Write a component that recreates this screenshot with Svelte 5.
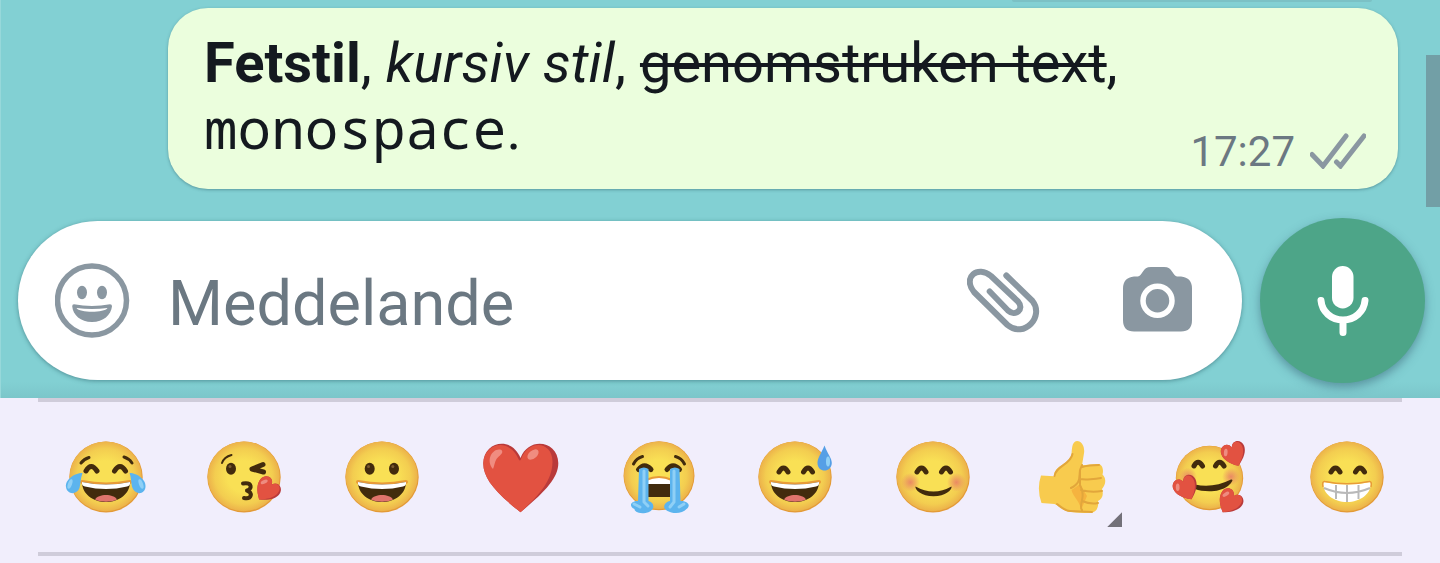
<script>
  const emojis = [
    { id: 'joy', label: 'Glädjetårar' },
    { id: 'kiss', label: 'Slängkyss' },
    { id: 'grinning', label: 'Leende' },
    { id: 'heart', label: 'Rött hjärta' },
    { id: 'sob', label: 'Storgråter' },
    { id: 'sweat', label: 'Svettigt leende' },
    { id: 'blush', label: 'Rodnande leende' },
    { id: 'thumb', label: 'Tummen upp', variants: true },
    { id: 'hearts', label: 'Leende med hjärtan' },
    { id: 'beaming', label: 'Strålande leende' }
  ];

  let message = $state('');

  function addEmoji(emoji) {
    message += emoji.label + ' ';
  }
</script>

{#snippet face()}
  <ellipse cx="45" cy="45" rx="36.700" ry="35.500" fill="#e39a36" />
  <ellipse cx="44.700" cy="44.400" rx="36" ry="34.800" fill="url(#skin)" />
{/snippet}

{#snippet smileEyes()}
  <path class="eye" d="M29 40q4.500-8 9 0M53.500 40q4.500-8 9 0" />
{/snippet}

{#snippet openMouth()}
  <path d="M21 50q24 5 48 0" fill="none" stroke="#e89b38" stroke-width="4" stroke-linecap="round" />
  <path d="M21 50q24 5 48 0C69 62 58 70 45 70S21 62 21 50z" fill="#422b0d" />
  <path d="M21 50q24 5 48 0c.5 3-1 4-3 4.500q-21 5-42 0c-2-.5-3.500-1.500-3-4.500z" fill="#fff" />
  <path d="M34 67.500c3-6 19-6 22 0-6 3-16 3-22 0z" fill="#e0746c" />
{/snippet}

{#snippet smallHeart(transform)}
  <g {transform}>
    <path d="M0 14C-9 8-13 2-13-4c0-8 10-11 13-3 3-8 13-5 13 3C13 2 9 8 0 14z" fill="#b93a3a" />
    <path d="M0 14C-9 8-13 2-13-4c0-8 10-11 13-3 3-7 11-5 11 3C11 2 7 8 0 14z" fill="#e25241" />
    <ellipse cx="-8" cy="-4" rx="2" ry="4" fill="#ee8c80" transform="rotate(25 -8 -4)" />
  </g>
{/snippet}

<main>
  <section class="chat">
    <div class="previous"></div>
    <article class="bubble">
      <p>
        <strong>Fetstil</strong>, <em>kursiv stil</em>, <s>genomstruken text</s>, <code>monospace</code>.
      </p>
      <div class="meta">
        <time>17:27</time>
        <svg width="56" height="36" viewBox="0 0 56 36" role="img" aria-label="Levererat">
          <path d="M2 21.500l11 11.500L36 3M26.500 29l4 4L54 3" fill="none" stroke="#8a97a1" stroke-width="5" stroke-linecap="round" />
        </svg>
      </div>
    </article>

    <form class="compose" onsubmit={(e) => e.preventDefault()}>
      <div class="field">
        <button type="button" aria-label="Emoji">
          <svg width="75" height="75" viewBox="0 0 75 75">
            <circle cx="37" cy="37.500" r="34.500" fill="none" stroke="#8a97a1" stroke-width="5.500" />
            <ellipse cx="27" cy="29.500" rx="5" ry="6.700" fill="#8a97a1" />
            <ellipse cx="47" cy="29.500" rx="5" ry="6.700" fill="#8a97a1" />
            <path d="M19 41.200q18 3.500 36 0 2 0 2 2C56 52 48.500 59 37 59S18 52 17.200 43.200q0-2 1.800-2zM21.500 45c3 5 28 5 31 0q-15.500 2-31 0z" fill="#8a97a1" fill-rule="evenodd" />
          </svg>
        </button>
        <input type="text" placeholder="Meddelande" aria-label="Meddelande" bind:value={message} />
        <button type="button" class="attach" aria-label="Bifoga">
          <svg width="74" height="74" viewBox="0 0 74 74">
            <path d="M39.300 11.500L65.500 37c12 15-8 38-25 24L7 28C-5 13 11 1 24 12l27 25.500c7 8-3 15.500-10 9L22.700 27.500" fill="none" stroke="#8a97a1" stroke-width="6" stroke-linecap="round" stroke-linejoin="round" />
          </svg>
        </button>
        <button type="button" aria-label="Kamera">
          <svg width="70" height="68" viewBox="0 0 70 68">
            <path d="M11 9.500h4c5-1 4-9.500 13-9.500h13c9 0 8 8.500 13 9.500h4q11 1 11 12V53q0 11.500-11 11.500H11Q0 64.500 0 53V21.500q0-11 11-12z" fill="#8a97a1" />
            <circle cx="34.500" cy="33.700" r="14.500" fill="none" stroke="#fff" stroke-width="5.500" />
          </svg>
        </button>
      </div>
      <button type="button" class="mic" aria-label="Spela in röstmeddelande">
        <svg width="52" height="72" viewBox="0 0 52 72">
          <rect x="15" y="1" width="21.500" height="42.500" rx="10.700" fill="#fff" />
          <path d="M4 35.500c1 11 10 19.500 22 19.500s21-8.500 22-19.500M26 56v11.500" fill="none" stroke="#fff" stroke-width="7" stroke-linecap="round" />
        </svg>
      </button>
    </form>
    <div class="scrollbar"></div>
  </section>

  <section class="keyboard">
    <hr />
    <div class="emojis">
      {#each emojis as emoji (emoji.id)}
        <button type="button" class="emoji" aria-label={emoji.label} onclick={() => addEmoji(emoji)}>
          <svg width="90" height="90" viewBox="0 0 90 90">
            {#if emoji.id === 'joy'}
              {@render face()}
              <path class="brow" d="M20 31q3-4 8-5.500M63 25q5 1.500 8 6" />
              <path class="eye" d="M25 39q5-9 11 0M53.500 39q5.500-9 11 0" />
              {@render openMouth()}
              <path d="M21.500 41C13 41 4 48 5 55c1 8 11 8 13.500 1 1-4 1-10 3-15zM68.500 41c8 0 17 7 16 14-1 8-10 8-13 1-1.500-4-1-10-3-15z" fill="#5cb4ee" />
              <ellipse cx="9" cy="52" rx="2" ry="5" fill="#8fd0f6" transform="rotate(20 9 52)" />
              <ellipse cx="80" cy="52" rx="2" ry="5" fill="#8fd0f6" transform="rotate(-20 80 52)" />
            {:else if emoji.id === 'kiss'}
              {@render face()}
              <path class="brow thin" d="M23 31q2-6 9.500-8" />
              <ellipse cx="32" cy="36.700" rx="5" ry="6" fill="#422b0d" />
              <circle cx="31" cy="34.500" r="1.500" fill="#7a5a30" />
              <path class="eye" d="M64 32.500l-11 4.500 11.500 3" />
              <path class="pout" d="M44 51.500c10-1.500 9 6 4 7 6 2 5 9-3 7.500" />
              {@render smallHeart('translate(68.500 57.500) rotate(40) scale(0.930)')}
            {:else if emoji.id === 'grinning'}
              {@render face()}
              <ellipse cx="32.700" cy="36.700" rx="5" ry="6" fill="#422b0d" />
              <ellipse cx="57" cy="36.700" rx="5" ry="6" fill="#422b0d" />
              <circle cx="31.500" cy="34.500" r="1.500" fill="#7a5a30" />
              <circle cx="55.800" cy="34.500" r="1.500" fill="#7a5a30" />
              {@render openMouth()}
            {:else if emoji.id === 'heart'}
              <path d="M45.500 80.300C20 60 8 46 8.300 31 9 9 37 4 45.500 26 54 4 83 9 83.300 31 83.500 46 70 60 45.500 80.300z" fill="#b93a3a" />
              <path d="M45.500 80.300C20 60 8 46 8.300 31 9 12 34 4 44 28c1 1 2 0 2-1C54 6 78 10 77.500 30 77 50 63 64 45.500 80.300z" fill="#e25241" />
              <path d="M18 37c-8-9 0-22 8.500-19 3 3-3 6-5 9s-2 7-3.500 10z" fill="#f08c80" />
              <ellipse cx="58" cy="22.500" rx="6.500" ry="4" fill="#f08c80" transform="rotate(-40 58 22.500)" />
            {:else if emoji.id === 'sob'}
              <ellipse cx="46" cy="43.700" rx="35.500" ry="34.500" fill="#e39a36" />
              <ellipse cx="45.800" cy="43.200" rx="34.800" ry="33.800" fill="url(#skin)" />
              <path class="brow" d="M20.500 32q3-6 9-7.500M62.500 24.500q6 1.500 9 7.500" />
              <path class="eye" d="M25.500 37.500q6-7.500 12.500 0M54 37.500q6-7.500 12.500 0" />
              <path d="M33 49q13-6 26 0v16H33z" fill="#422b0d" />
              <path d="M33 48.500q13-6 26 0V52H33z" fill="#fff" />
              <path d="M33 48q13-6 26 0" fill="none" stroke="#e89b38" stroke-width="2" />
              <path d="M26 37q5-3 9.500 0v32c6 1 8 10-3 12-8 1-11-2-11-4-6-3-4-8 3.500-8zM57 37q5-3 9.500 0l1 32c7 0 11 4 6 8-4 5-14 5-19 2-6-3-3-9 2.500-10z" fill="#5cb4ee" />
              <path d="M31 39v31l4 4M61 39v31l-4 5M21 72l6 3M71 72l-5 3" fill="none" stroke="#8fd0f6" stroke-width="3" stroke-linecap="round" />
            {:else if emoji.id === 'sweat'}
              {@render face()}
              {@render smileEyes()}
              {@render openMouth()}
              <path d="M74.500 13.500C71 22 67.500 26 67.500 31c0 10 14 10 14.300 0 0-5-4.300-9-7.300-17.500z" fill="#559fe6" />
              <ellipse cx="78" cy="29.500" rx="2" ry="5" fill="#8fd0f6" />
            {:else if emoji.id === 'blush'}
              {@render face()}
              <circle cx="22.500" cy="50.300" r="9.500" fill="url(#cheek)" />
              <circle cx="68.500" cy="50.300" r="9.500" fill="url(#cheek)" />
              {@render smileEyes()}
              <path d="M27.500 54.500q18 10 36 0c1 3-6 9.800-18 9.800s-19-6.800-18-9.800z" fill="#422b0d" />
            {:else if emoji.id === 'thumb'}
              <path d="M15 43.500l13 .8c0-11 16-12 17.500-22 .5-4 0-13 5.500-13.300 5 0 8 6 7 12.300l-2 12 16-1.300c4 0 6 5 4.500 10.500 4 4 3.500 10-.5 14.500 2 6 0 10-4 12 1 6-1.500 11-6 11.500-8 1-18 0-24-1-6-2-9-5.500-13.500-7.500L15.500 71q-5-14-.5-27.500z" fill="#f8cb4e" />
              <path d="M54 52l7 12-6 14c-1-9-8-13-9.500-20 3-2 6-4 8.500-6z" fill="#f5b33f" />
              <path d="M28.500 44c1-10 16-11 18-22M56 33l-2 5c-1 8 1 13-9 18M56 35c7-2 11-2 17-2M54 47c5 1 16 0 21-1M55 58c7 2 15 2 21 1M56 69c7 3 12 3 16 2M54 38v14M54 53q4 7 2 15t0 10M31 72c5 4 8 7 13 7l22 1" fill="none" stroke="#e2a63b" stroke-width="2" stroke-linecap="round" stroke-linejoin="round" />
            {:else if emoji.id === 'hearts'}
              <ellipse cx="45.500" cy="46" rx="33.700" ry="32.200" fill="#e39a36" />
              <ellipse cx="45.300" cy="45.500" rx="33" ry="31.500" fill="url(#skin)" />
              <circle cx="24" cy="44.700" r="9" fill="url(#cheek)" />
              <circle cx="67" cy="44.700" r="9" fill="url(#cheek)" />
              <path class="eye" d="M30 34q4-7.500 8.500 0M51.500 34q4-7.500 8.500 0" />
              <path d="M31 52.500q18 4 36-5c3-.5 1 3-3 6.500-9 7-25 6-33 3z" fill="#422b0d" />
              {@render smallHeart('translate(70 21.500) rotate(-20) scale(0.930)')}
              {@render smallHeart('translate(22 55.500) rotate(-25) scale(0.930)')}
              {@render smallHeart('translate(66 69.500) rotate(34) scale(0.930)')}
            {:else}
              {@render face()}
              {@render smileEyes()}
              <path d="M21.500 50q23.500 5 47 0C70 62 58 70 45 70S20 62 21.500 50z" fill="#fff" />
              <path d="M22 56q23 10 46 0M34 53v14M45 53v17M56.500 53v14" fill="none" stroke="#b9b9b9" stroke-width="2" />
              <path d="M21 55c-1-4 0-6 2-5.500q22 4.500 44 0c2-.5 3 1.500 2 5.500" fill="none" stroke="#e89b38" stroke-width="1.500" />
            {/if}
          </svg>
          {#if emoji.variants}
            <span class="more"></span>
          {/if}
        </button>
      {/each}
    </div>
    <hr />
  </section>

  <svg class="defs" width="0" height="0" aria-hidden="true">
    <defs>
      <radialGradient id="skin">
        <stop offset="0.450" stop-color="#f9e055" />
        <stop offset="0.800" stop-color="#f3cd50" />
        <stop offset="1" stop-color="#ecb24a" />
      </radialGradient>
      <radialGradient id="cheek">
        <stop offset="0" stop-color="#ea8a63" />
        <stop offset="1" stop-color="#ea8a63" stop-opacity="0" />
      </radialGradient>
    </defs>
  </svg>
</main>

<style>
  :global(body) {
    margin: 0;
    background: #f1eefc;
  }

  main {
    font-family: Roboto, 'Noto Sans', sans-serif;
    color: #14191f;
  }

  svg {
    display: block;
    flex: none;
  }

  button {
    border: none;
    background: none;
    padding: 0;
    cursor: pointer;
  }

  .chat {
    position: relative;
    background: linear-gradient(to top, #7bc6ca, #82d0d3 16px);
    box-shadow: inset 1px 0 #97d8da;
    padding-bottom: 15px;
  }

  .previous {
    height: 2px;
    margin: 0 68px 6px auto;
    width: 25%;
    border-radius: 0 0 40px 40px;
    background: #7bc1c5;
  }

  .bubble {
    display: flex;
    align-items: flex-end;
    justify-content: space-between;
    margin: 0 42px 29px 168px;
    padding: 22px 32px 25px 36px;
    border-radius: 40px;
    background: #ebfedd;
    box-shadow: 0 1px 3px rgba(50, 100, 110, 0.5);
  }

  p {
    margin: 0;
    font-size: 56px;
    line-height: 67px;
  }

  s {
    text-decoration-thickness: 4px;
  }

  code {
    font-family: 'Noto Sans Mono', 'DejaVu Sans Mono', monospace;
    font-size: 56px;
    line-height: 1;
  }

  .meta {
    display: flex;
    align-items: center;
    gap: 15px;
    height: 26px;
    color: #6b7882;
    font-size: 42px;
  }

  .compose {
    display: flex;
    align-items: center;
    gap: 18px;
    padding: 0 15px 0 18px;
  }

  .field {
    flex: 1;
    min-width: 0;
    height: 159px;
    box-sizing: border-box;
    display: flex;
    align-items: center;
    padding: 0 49px 0 37px;
    border-radius: 80px;
    background: #fff;
    box-shadow: 0 1px 4px rgba(30, 80, 90, 0.5);
  }

  input {
    flex: 1;
    min-width: 0;
    margin-left: 38px;
    padding: 6px 0 0;
    border: none;
    outline: none;
    background: none;
    font-family: inherit;
    font-size: 63px;
    color: #14191f;
  }

  input::placeholder {
    color: #6b7882;
    opacity: 1;
  }

  .attach {
    margin-right: 82px;
  }

  .mic {
    flex: none;
    display: flex;
    align-items: center;
    justify-content: center;
    width: 165px;
    height: 165px;
    border-radius: 50%;
    background: #4da588;
    box-shadow: 0 4px 10px rgba(50, 90, 110, 0.5);
  }

  .scrollbar {
    position: absolute;
    top: 55px;
    right: 0;
    width: 14px;
    height: 152px;
    background: #729fa6;
  }

  .keyboard {
    position: relative;
    padding-bottom: 7px;
    background: #f1eefc;
  }

  hr {
    height: 4px;
    margin: 0 38px;
    border: none;
    background: #cfccda;
  }

  .emojis {
    display: flex;
    padding: 0 24px 0 37px;
  }

  .emoji {
    position: relative;
    flex: 1;
    height: 150px;
    display: flex;
    align-items: center;
    justify-content: center;
  }

  .more {
    position: absolute;
    right: 18px;
    bottom: 25px;
    width: 15px;
    height: 15px;
    background: #737179;
    clip-path: polygon(100% 0, 100% 100%, 0 100%);
  }

  .eye,
  .brow,
  .pout {
    fill: none;
    stroke: #422b0d;
    stroke-width: 5px;
    stroke-linecap: round;
    stroke-linejoin: round;
  }

  .pout {
    stroke-width: 4px;
  }

  .brow {
    stroke-width: 3px;
  }

  .thin {
    stroke-width: 2px;
  }

  .defs {
    position: absolute;
  }
</style>
